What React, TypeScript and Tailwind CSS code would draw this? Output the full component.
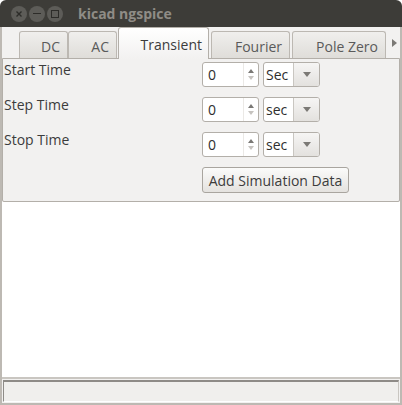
import React from "react";

const font = "font-['Open_Sans','Noto_Sans',sans-serif]";

const rows = [
  { label: "Start Time", unit: "Sec" },
  { label: "Step Time", unit: "sec" },
  { label: "Stop Time", unit: "sec" },
];

const Spin: React.FC<{ value: string }> = ({ value }) => (
  <div className="flex h-[25px] w-[57px] overflow-hidden rounded-[3px] border border-[#b3afa9] bg-white">
    <div className="flex flex-1 items-center pl-[5px] text-[14px] text-[#2e2e2e]">{value}</div>
    <div className="flex w-[15px] flex-col items-center justify-center gap-[3px] border-l border-[#ebe9e6]">
      <svg width="6" height="4" viewBox="0 0 6 4">
        <polygon points="0,4 3,0 6,4" fill="#7a7875" />
      </svg>
      <svg width="6" height="4" viewBox="0 0 6 4">
        <polygon points="0,0 6,0 3,4" fill="#c6c3bf" />
      </svg>
    </div>
  </div>
);

const Combo: React.FC<{ value: string }> = ({ value }) => (
  <div className="flex h-[25px] w-[57px] overflow-hidden rounded-[3px] border border-[#b3afa9] bg-white">
    <div className="flex w-[29px] items-center pl-[2px] text-[14px] text-[#2e2e2e]">{value}</div>
    <div className="flex flex-1 items-center justify-center border-l border-[#c9c6c1] bg-gradient-to-b from-[#f6f5f4] to-[#e3e1de]">
      <svg width="8" height="5" viewBox="0 0 8 5">
        <polygon points="0,0 8,0 4,5" fill="#7b7975" />
      </svg>
    </div>
  </div>
);

const Tab: React.FC<{ label: string; w: string; active?: boolean; className?: string }> = ({
  label,
  w,
  active,
  className,
}) =>
  active ? (
    <div
      className={`relative z-10 -mb-px flex h-[32px] ${w} items-center justify-end rounded-t-[3px] border border-b-0 border-[#b3afa9] bg-gradient-to-b from-white to-[#f2f1f0] pr-[6px] pt-[1px] text-[14px] text-[#3c3c3c] ${className ?? ""}`}
    >
      {label}
    </div>
  ) : (
    <div
      className={`flex h-[27px] ${w} items-center justify-end rounded-t-[3px] border border-b-0 border-[#bcb8b2] bg-gradient-to-b from-[#f0efed] to-[#dfddd9] pr-[7px] pt-[3px] text-[14px] text-[#5a5a5a] ${className ?? ""}`}
    >
      {label}
    </div>
  );

export default function App() {
  return (
    <div className={`flex h-[405px] w-[402px] flex-col overflow-hidden bg-white ${font}`}>
      {/* title bar */}
      <div className="flex h-[27px] items-center rounded-t-[6px] bg-[#3d3c38]">
        <div className="ml-[11px] flex gap-[2px]">
          <div className="flex h-[16px] w-[16px] items-center justify-center rounded-full bg-[#5d5c58]">
            <svg width="8" height="8" viewBox="0 0 8 8">
              <path d="M1.5 1.5 L6.5 6.5 M6.5 1.5 L1.5 6.5" stroke="#2d2c29" strokeWidth="1.4" />
            </svg>
          </div>
          <div className="flex h-[16px] w-[16px] items-center justify-center rounded-full bg-[#5d5c58]">
            <div className="h-[1.5px] w-[8px] bg-[#2d2c29]" />
          </div>
          <div className="flex h-[16px] w-[16px] items-center justify-center rounded-full bg-[#5d5c58]">
            <div className="h-[8px] w-[8px] border border-[#2d2c29]" />
          </div>
        </div>
        <div className="ml-[15px] pb-[1px] text-[14px] font-bold text-[#8f8c86]">kicad ngspice</div>
      </div>

      <div className="flex flex-1 flex-col border-x-2 border-b-2 border-[#bdb9b3] bg-[#f2f1f0]">
        {/* tabs */}
        <div className="flex h-[31px] items-end pl-[17px]">
          <Tab label="DC" w="w-[49px]" />
          <Tab label="AC" w="w-[49px]" />
          <Tab label="Transient" w="w-[91px]" active className="ml-px" />
          <Tab label="Fourier" w="w-[79px]" className="ml-[2px]" />
          <Tab label="Pole Zero" w="w-[94px]" className="ml-[2px]" />
          <div className="mb-[11px] ml-[6px]">
            <svg width="5" height="8" viewBox="0 0 5 8">
              <polygon points="0,0 5,4 0,8" fill="#7b7975" />
            </svg>
          </div>
        </div>

        {/* transient panel */}
        <div className="h-[144px] rounded-b-[2px] border border-[#b3afa9] bg-[#f2f1f0] text-[14px] text-[#3c3c3c]">
          {rows.map((r) => (
            <div key={r.label} className="flex h-[35px]">
              <div className="w-[199px] pl-[1px] pt-[1px] leading-[19px]">{r.label}</div>
              <div className="flex gap-[4px] pt-[3px]">
                <Spin value="0" />
                <Combo value={r.unit} />
              </div>
            </div>
          ))}
          <div className="flex pl-[199px] pt-[3px]">
            <button className="h-[26px] w-[147px] rounded-[3px] border border-[#a9a59f] bg-gradient-to-b from-[#fbfbfa] to-[#e4e2df] text-[14px] text-[#3c3c3c]">
              Add Simulation Data
            </button>
          </div>
        </div>

        {/* output area */}
        <div className="flex-1 bg-white" />

        {/* status bar */}
        <div className="h-[26px] border-t-2 border-[#c9c6c1] bg-[#f2f1f0] px-px pt-px">
          <div className="h-[22px] border border-t-2 border-[#8e8b87] border-b-white border-r-[#c9c6c1] bg-[#f0efed]" />
        </div>
      </div>
    </div>
  );
}
